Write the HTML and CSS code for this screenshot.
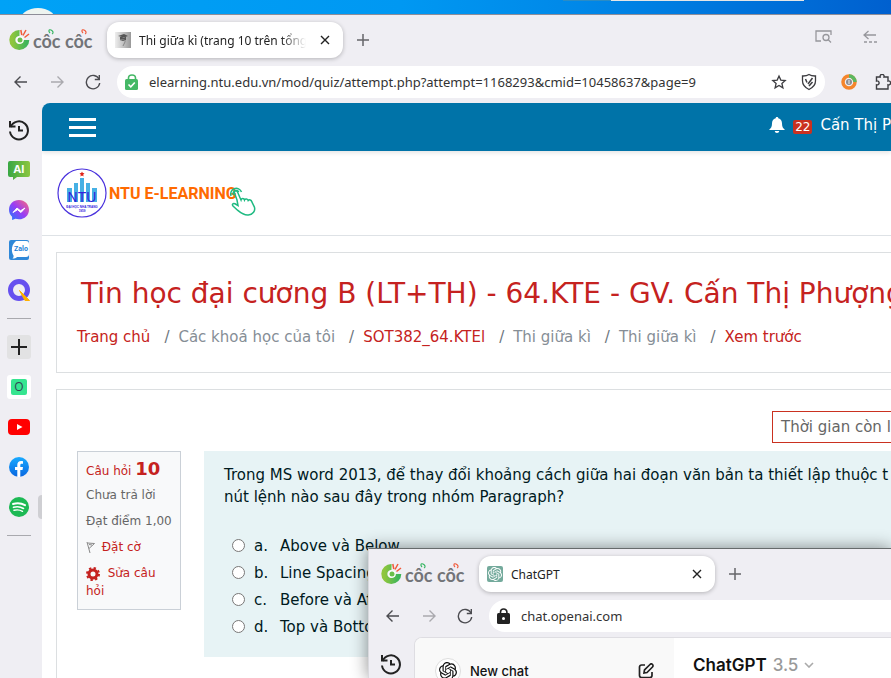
FILE: index.html
```html
<!DOCTYPE html>
<html lang="vi">
<head>
<meta charset="utf-8">
<title>Thi giữa kì</title>
<link rel="stylesheet" href="styles.css">
</head>
<body>
<svg class="defs" aria-hidden="true">
  <defs>
    <linearGradient id="g-coc" x1="0" y1="0" x2="1" y2="0"><stop offset="0" stop-color="#8fc63d"/><stop offset="1" stop-color="#3fb55a"/></linearGradient>
    <linearGradient id="g-ai" x1="0" y1="0" x2="1" y2="0"><stop offset="0" stop-color="#38a744"/><stop offset="1" stop-color="#8cc63f"/></linearGradient>
    <linearGradient id="g-msg" x1="0" y1="1" x2="1" y2="0"><stop offset="0" stop-color="#1a7cff"/><stop offset=".5" stop-color="#9a3cf5"/><stop offset="1" stop-color="#ff6a78"/></linearGradient>
    <linearGradient id="g-fb" x1="0" y1="0" x2="0" y2="1"><stop offset="0" stop-color="#19aaff"/><stop offset="1" stop-color="#0866e0"/></linearGradient>
    <symbol id="coc" viewBox="0 0 86 26">
      <path d="M11.500 7A7 7 0 1 0 18.300 14" fill="none" stroke="url(#g-coc)" stroke-width="6"/>
      <circle cx="12" cy="14" r="3.800" fill="#fff"/><circle cx="12" cy="14" r="2.500" fill="#6abf4b"/>
      <path d="M12.800 4l1 5M18 4l-3 5.500M21 8l-4.500 3.500" stroke="#f15a3a" stroke-width="1.500"/>
      <text x="25" y="22" class="coc-word">côc côc</text>
      <path d="M42 7c-2-2-1-4 1-3s3 3 1 4" fill="none" stroke="#35b561" stroke-width="1.200"/>
      <path d="M75 7c-2-2-1-4 1-3s3 3 1 4" fill="none" stroke="#f15a3a" stroke-width="1.200"/>
    </symbol>
    <symbol id="back" viewBox="0 0 16 16"><path d="M14 8H2M7.500 2.500L2 8l5.500 5.500" fill="none" stroke="currentColor" stroke-width="1.400"/></symbol>
    <symbol id="fwd" viewBox="0 0 16 16"><path d="M2 8h12M8.500 2.500L14 8l-5.500 5.500" fill="none" stroke="currentColor" stroke-width="1.400"/></symbol>
    <symbol id="reload" viewBox="0 0 16 16"><path d="M14 5A6.700 6.700 0 1 0 14.700 9" fill="none" stroke="currentColor" stroke-width="1.400"/><path d="M14.300 1v4.500H9.800" fill="none" stroke="currentColor" stroke-width="1.400"/></symbol>
    <symbol id="close" viewBox="0 0 10 10"><path d="M1 1l8 8M9 1L1 9" stroke="#222" stroke-width="1.400"/></symbol>
    <symbol id="plus" viewBox="0 0 12 12"><path d="M6 0v12M0 6h12" stroke="#66666a" stroke-width="1.500"/></symbol>
    <symbol id="history" viewBox="0 0 22 22"><path d="M2.600 8A9 9 0 1 1 2 12.500" fill="none" stroke="#222" stroke-width="2"/><path d="M2 2v5.500h5.500M11 7v4.500h4" fill="none" stroke="#222" stroke-width="2"/></symbol>
    <symbol id="knot" viewBox="0 0 24 24"><path fill="currentColor" d="M22.282 9.821a5.985 5.985 0 0 0-.516-4.910 6.046 6.046 0 0 0-6.510-2.900A6.065 6.065 0 0 0 4.981 4.182a5.985 5.985 0 0 0-3.998 2.900 6.046 6.046 0 0 0 .743 7.097 5.980 5.980 0 0 0 .511 4.911 6.051 6.051 0 0 0 6.515 2.900A5.985 5.985 0 0 0 13.260 24a6.056 6.056 0 0 0 5.772-4.206 5.990 5.990 0 0 0 3.998-2.900 6.056 6.056 0 0 0-.747-7.073zM13.260 22.430a4.476 4.476 0 0 1-2.876-1.041l.141-.080 4.779-2.758a.795.795 0 0 0 .393-.681v-6.737l2.020 1.169a.071.071 0 0 1 .038.052v5.583a4.504 4.504 0 0 1-4.495 4.494zM3.600 18.304a4.471 4.471 0 0 1-.535-3.014l.142.085 4.783 2.759a.771.771 0 0 0 .781 0l5.843-3.369v2.332a.080.080 0 0 1-.033.062L9.740 19.950a4.500 4.500 0 0 1-6.140-1.646zM2.341 7.896a4.485 4.485 0 0 1 2.366-1.973V11.600a.766.766 0 0 0 .388.677l5.815 3.354-2.020 1.169a.076.076 0 0 1-.071 0l-4.830-2.787A4.504 4.504 0 0 1 2.341 7.872zm16.597 3.855l-5.834-3.387L15.119 7.200a.076.076 0 0 1 .071 0l4.830 2.791a4.494 4.494 0 0 1-.676 8.105v-5.678a.790.790 0 0 0-.407-.667zm2.010-3.023l-.141-.085-4.774-2.782a.776.776 0 0 0-.785 0L9.409 9.230V6.897a.066.066 0 0 1 .028-.061l4.830-2.787a4.500 4.500 0 0 1 6.681 4.660zM8.307 12.863l-2.020-1.164a.080.080 0 0 1-.038-.057V6.074a4.500 4.500 0 0 1 7.376-3.453l-.142.080L8.704 5.459a.795.795 0 0 0-.393.681zm1.097-2.365l2.602-1.500 2.607 1.500v2.999l-2.597 1.500-2.607-1.500z"/></symbol>
  </defs>
</svg>
<div class="desktop">
  <svg class="desk-icon" width="36" height="6"><ellipse cx="18" cy="13" rx="18" ry="13" fill="#eef4f0"/></svg>
  <div class="behind"></div>

  <section class="window main-window">
    <div class="tabs">
      <svg class="brand" width="86" height="26" role="img" aria-label="Cốc Cốc"><use href="#coc"/></svg>
      <div class="tab">
        <svg width="16" height="16"><defs><linearGradient id="g-fav" x1="0" x2="1"><stop offset="0" stop-color="#eee"/><stop offset="1" stop-color="#999"/></linearGradient></defs><rect width="16" height="16" fill="url(#g-fav)"/><path d="M3 4l6-2 4 2-4 1.500zM5 5v3l3 1 3-1V5z" fill="#555"/><path d="M5 8c1-1 6-1 5 2l-2 4" fill="none" stroke="#888"/></svg>
        <span class="tab-title faded">Thi giữa kì (trang 10 trên tổng</span>
        <button aria-label="Đóng thẻ"><svg width="10" height="10"><use href="#close"/></svg></button>
      </div>
      <button class="new-tab" aria-label="Thẻ mới"><svg width="12" height="12"><use href="#plus"/></svg></button>
      <div class="tab-tools">
        <svg width="18" height="14" fill="none" stroke="#97979c" stroke-width="1.300"><path d="M6 11H1V1h15v4"/><circle cx="11" cy="7.500" r="3"/><path d="M13 9.500l3 3"/></svg>
        <svg width="14" height="14" fill="none" stroke="#97979c" stroke-width="1.300"><path d="M13 5H1M5.500 1L1 5l4.500 4"/><path d="M1 12h13" stroke-dasharray="3 2"/></svg>
      </div>
    </div>
    <div class="toolbar">
      <button aria-label="Quay lại"><svg width="16" height="16"><use href="#back"/></svg></button>
      <button class="dim" aria-label="Tiến"><svg width="16" height="16"><use href="#fwd"/></svg></button>
      <button aria-label="Tải lại"><svg width="16" height="16"><use href="#reload"/></svg></button>
      <div class="address">
        <svg width="14" height="16"><path d="M3.500 6V4a3.500 3 0 0 1 7 0v2" fill="none" stroke="#45b866" stroke-width="1.600"/><rect y="5" width="13" height="11" rx="1.500" fill="#45b866"/><path d="M3.500 10.500l2.300 2.300 4-4.300" fill="none" stroke="#fff" stroke-width="1.600"/></svg>
        <input aria-label="Địa chỉ" value="elearning.ntu.edu.vn/mod/quiz/attempt.php?attempt=1168293&amp;cmid=10458637&amp;page=9">
        <svg width="16" height="16" fill="none" stroke="#3c3c40" stroke-width="1.300"><path d="M8 2l1.800 4.100 4.400.4-3.300 2.900 1 4.400L8 11.500l-3.900 2.300 1-4.400-3.300-2.900 4.400-.4z"/></svg>
        <svg width="16" height="18" fill="none" stroke="#3c3c40" stroke-width="1.300"><path d="M8 1.500c2 1.300 4 1.600 6.500 1.500v5c0 4-2.500 6.500-6.500 8.500-4-2-6.500-4.500-6.500-8.500V3C4 3.100 6 2.800 8 1.500z"/><path d="M4.500 6l1.500 3.500M7 11l4.500-6M8 13l3.500-4" stroke-width="1.500"/></svg>
      </div>
      <svg width="16" height="16"><circle cx="8" cy="8" r="6" fill="none" stroke="#f5852b" stroke-width="3.500"/><path d="M8 2a6 6 0 0 1 6 6" fill="none" stroke="#5bb860" stroke-width="3.500"/><circle cx="8" cy="8" r="3" fill="#8c8c90"/><path d="M8 6v4" stroke="#eee"/></svg>
      <svg class="puzzle" width="16" height="16" fill="none" stroke="#3c3c40" stroke-width="1.400"><path d="M1.500 3h3.700a2 2 0 1 1 3.800 0H13v4a2 2 0 1 1 0 3.800V15H1.500v-4.200a2 2 0 1 0 0-3.800z"/></svg>
    </div>
    <div class="body">
      <nav class="rail" aria-label="Thanh bên">
        <button aria-label="Lịch sử"><svg width="22" height="22"><use href="#history"/></svg></button>
        <button aria-label="AI"><svg width="22" height="20"><path d="M2 1h18a2 2 0 0 1 2 2v12a2 2 0 0 1-2 2H9l-4 3v-3H2a2 2 0 0 1-2-2V3a2 2 0 0 1 2-2z" fill="url(#g-ai)"/><text x="11" y="13" class="ai-word">AI</text></svg></button>
        <button aria-label="Messenger"><svg width="20" height="20"><path d="M10 0C4.300 0 0 4.200 0 9.700c0 2.900 1.200 5.300 3.100 7V20l3.300-1.200c1.100.3 2.300.5 3.600.5 5.700 0 10-4.200 10-9.600S15.700 0 10 0z" fill="url(#g-msg)"/><path d="M4 12.500l4-4.500 3.500 2.800L16 8l-4 4.500-3.500-2.800z" fill="#fff" stroke="#fff"/></svg></button>
        <button aria-label="Zalo"><svg width="20" height="20"><rect width="20" height="20" rx="2" fill="#2f88d8"/><path d="M7 1h10a3 3 0 0 1 3 3v10a3 3 0 0 1-3 3H8c-1 1-2.500 1.500-4.500 1.500 1-1 1.300-2 1-3C2 12 2 5 7 1z" fill="#fff"/><text x="12" y="11" class="zalo-word">Zalo</text></svg></button>
        <button aria-label="Tìm kiếm"><svg width="22" height="22"><circle cx="11" cy="11" r="8.500" fill="none" stroke="#6650ef" stroke-width="5"/><path d="M11.500 11.500l10 10h-4.500z" fill="#ffb000" stroke="#ffb000"/></svg></button>
        <hr>
        <button class="chip add" aria-label="Thêm"><svg width="16" height="16"><path d="M8 0v16M0 8h16" stroke="#222" stroke-width="2"/></svg></button>
        <button class="chip letter"><span>O</span></button>
        <button aria-label="YouTube"><svg width="22" height="16"><rect width="22" height="16" rx="4" fill="#f00"/><path d="M9 5l5.500 3L9 11z" fill="#fff"/></svg></button>
        <button aria-label="Facebook"><svg width="20" height="20"><circle cx="10" cy="10" r="10" fill="url(#g-fb)"/><path d="M8.300 20v-7H6v-3h2.300V8c0-2.600 1.500-4 3.800-4 .9 0 1.700.1 1.900.2v2.600h-1.300c-1 0-1.400.6-1.400 1.400V10H14l-.5 3h-2.200v7z" fill="#fff"/></svg></button>
        <button aria-label="Spotify"><svg width="20" height="20" fill="none" stroke="#fff" stroke-linecap="round"><circle cx="10" cy="10" r="10" fill="#1db954" stroke="none"/><path d="M4 7c4-1.200 8.500-.8 12 1.200" stroke-width="2"/><path d="M4.500 10.300c3.500-1 7-.6 10 1.100" stroke-width="1.700"/><path d="M5 13.300c3-.8 6-.5 8.500 1" stroke-width="1.400"/></svg></button>
        <hr>
        <i class="grip"></i>
      </nav>
      <main class="page">
        <header class="site-bar">
          <button class="burger" aria-label="Menu"><i></i><i></i><i></i></button>
          <div class="user">
            <svg width="16" height="16"><path d="M8 0c1 0 1.300.6 1.300 1.300C12 2 13 4 13 6.500c0 3 .8 4.500 3 6.500H0c2.200-2 3-3.500 3-6.500C3 4 4 2 6.700 1.300 6.700.6 7 0 8 0zM5.800 14h4.400c0 1.200-1 2-2.200 2s-2.200-.8-2.200-2z" fill="#fff"/></svg>
            <span class="badge">22</span>
            <a href="#user">Cấn Thị P</a>
          </div>
        </header>
        <div class="logo-bar">
          <svg width="50" height="50" role="img" aria-label="NTU"><circle cx="25" cy="25" r="24" fill="#fff" stroke="#4a32dd" stroke-width="1.200"/><path d="M10 34V20h5v14zM17 34V15h4v19zM23 34V10h4v24zM29 34V15h4v19zM35 34V20h5v14z" fill="#46b0e4"/><path d="M25 3.500l.8 1.600 1.700.2-1.200 1.300.2 1.800-1.500-.9-1.500.9.200-1.800-1.200-1.300 1.700-.2z" fill="#e02418"/><text x="25" y="34" class="seal-name">NTU</text><text x="25" y="40" class="seal-small">ĐẠI HỌC NHA TRANG</text><text x="25" y="44" class="seal-small">1959</text></svg>
          <span class="site-name">NTU E-LEARNING</span>
          <svg class="hand" width="28" height="30" fill="none" stroke="#1fba82" stroke-width="1.500"><path d="M8 13L5.500 6c-.8-2.200 2-3.300 3-1l3.500 8c.5-2 3-2 3.500 0 .8-1.600 3.200-1.300 3.700.5 1-1.200 3.200-.7 3.600 1.300l2.500 5c1.500 4-1.500 7.700-6 8.200-4.500.5-8-2.500-11-5L4 19c-1.300-1.600 0-3 2-2.200l3 1.700z"/><path d="M2 9a5.500 5.500 0 1 1 10.500-4M4.500 8a3 3 0 1 1 5.300-3"/></svg>
        </div>
        <section class="card heading">
          <h1>Tin học đại cương B (LT+TH) - 64.KTE - GV. Cấn Thị Phượng</h1>
          <ol class="crumbs">
            <li><a href="#home">Trang chủ</a></li>
            <li>Các khoá học của tôi</li>
            <li><a href="#course">SOT382_64.KTEl</a></li>
            <li>Thi giữa kì</li>
            <li>Thi giữa kì</li>
            <li><a href="#preview">Xem trước</a></li>
          </ol>
        </section>
        <section class="card quiz">
          <div class="timer">Thời gian còn l</div>
          <div class="question-row">
            <aside class="info">
              <h2>Câu hỏi <b>10</b></h2>
              <p>Chưa trả lời</p>
              <p>Đạt điểm 1,00</p>
              <p><a href="#flag"><svg width="12" height="13" fill="none" stroke="#888"><path d="M1 1l3 11M1.500 2l7 .5-5.500 5M3 3.500l3 .5"/></svg> Đặt cờ</a></p>
              <p class="edit"><a href="#edit"><svg width="14" height="14"><circle cx="7" cy="7" r="4" fill="none" stroke="#c52220" stroke-width="3"/><circle cx="7" cy="7" r="6" fill="none" stroke="#c52220" stroke-width="2" stroke-dasharray="2.350 2.350"/></svg>&nbsp; Sửa câu hỏi</a></p>
            </aside>
            <form class="question">
              <p>Trong MS word 2013, để thay đổi khoảng cách giữa hai đoạn văn bản ta thiết lập thuộc t<br>nút lệnh nào sau đây trong nhóm Paragraph?</p>
              <label><input type="radio" name="answer"><span>a.</span>Above và Below</label>
              <label><input type="radio" name="answer"><span>b.</span>Line Spacing</label>
              <label><input type="radio" name="answer"><span>c.</span>Before và After</label>
              <label><input type="radio" name="answer"><span>d.</span>Top và Bottom</label>
            </form>
          </div>
        </section>
      </main>
    </div>
  </section>

  <section class="window chat-window">
    <div class="tabs">
      <svg class="brand" width="86" height="26" role="img" aria-label="Cốc Cốc"><use href="#coc"/></svg>
      <div class="tab">
        <span class="gpt-fav"><svg width="14" height="14"><use href="#knot"/></svg></span>
        <span class="tab-title">ChatGPT</span>
        <button aria-label="Đóng thẻ"><svg width="10" height="10"><use href="#close"/></svg></button>
      </div>
      <button class="new-tab" aria-label="Thẻ mới"><svg width="12" height="12"><use href="#plus"/></svg></button>
    </div>
    <div class="toolbar">
      <button aria-label="Quay lại"><svg width="16" height="16"><use href="#back"/></svg></button>
      <button class="dim" aria-label="Tiến"><svg width="16" height="16"><use href="#fwd"/></svg></button>
      <button aria-label="Tải lại"><svg width="16" height="16"><use href="#reload"/></svg></button>
      <div class="address">
        <svg width="14" height="16"><path d="M3.500 6V4a3.200 3 0 0 1 6.400 0v2" fill="none" stroke="#222" stroke-width="1.600"/><rect y="5" width="13" height="11" rx="1.500" fill="#222"/><circle cx="6.500" cy="10.500" r="1.500" fill="#fff"/></svg>
        <input aria-label="Địa chỉ" value="chat.openai.com">
      </div>
    </div>
    <div class="body">
      <nav class="rail" aria-label="Thanh bên">
        <button aria-label="Lịch sử"><svg width="22" height="22"><use href="#history"/></svg></button>
      </nav>
      <div class="chat">
        <aside class="chat-side">
          <button class="new-chat"><span class="avatar"><svg width="18" height="18"><use href="#knot"/></svg></span><span>New chat</span>
            <svg width="16" height="16" fill="none" stroke="#222" stroke-width="1.700"><path d="M7 2H3.500A2 2 0 0 0 1.500 4v8.500a2 2 0 0 0 2 2H12a2 2 0 0 0 2-2V9M6 10l.5-3L12 1.500a1.700 1.700 0 0 1 2.500 2.500L9 9.500z"/></svg></button>
        </aside>
        <div class="chat-main">
          <button class="model">ChatGPT <span>3.5</span><svg width="10" height="6"><path d="M1 1l4 4 4-4" fill="none" stroke="#aaa" stroke-width="1.600"/></svg></button>
        </div>
      </div>
    </div>
  </section>
</div>
</body>
</html>
```
FILE: styles.css
```css
* { box-sizing: border-box; }
body { margin: 0; }
button { padding: 0; border: 0; background: none; font: inherit; color: inherit; display: flex; align-items: center; justify-content: center; }
a { color: #c52220; text-decoration: none; }
svg { flex: none; }
.defs { position: absolute; width: 0; height: 0; }

.desktop { position: relative; height: 100vh; overflow: hidden; background: linear-gradient(90deg, #00a2f6 0, #0098f2 45%, #0088e8 65%, #0060cf 100%); }
.desk-icon { position: absolute; left: 20px; top: 8px; }
.behind { position: absolute; left: 563px; top: 0; width: 241px; height: 1px; background: linear-gradient(90deg, #2b8cc4 20%, #e6e6e6 20%); }

.window { position: absolute; right: 0; bottom: 0; display: flex; flex-direction: column; overflow: hidden; background: #efeef3; border-top: 1px solid #8e8d98; font-family: "Noto Sans", sans-serif; }
.main-window { left: 0; top: 14px; }
.chat-window { left: 368px; top: 548px; padding-left: 3px; border-top-color: #666b6c; border-left: 1px solid #d9d9de; }
.desktop > .chat-window { overflow: visible; box-shadow: 0 0 16px rgba(0, 0, 0, .45); }

.tabs { display: flex; padding: 7px 0 8px 8px; }
.brand { margin: 4px 13px 0 0; }
.coc-word { font: bold 18px Lato, sans-serif; fill: #727478; }
.tab { display: flex; align-items: center; gap: 8px; width: 236px; height: 36px; padding: 0 13px 0 8px; border-radius: 12px; background: #fff; box-shadow: 0 1px 4px rgba(0, 0, 0, .25); font-size: 12px; color: #222; }
.tab-title { flex: 1; overflow: hidden; white-space: nowrap; }
.faded { -webkit-mask-image: linear-gradient(90deg, #000 85%, transparent); mask-image: linear-gradient(90deg, #000 85%, transparent); }
.tab button { margin-left: 6px; }
.new-tab { width: 40px; height: 36px; }
.tab-tools { display: flex; gap: 30px; margin-left: auto; padding: 8px 14px 0 0; }

.toolbar { display: flex; align-items: center; height: 32px; padding-left: 13px; color: #4b4b50; }
.toolbar > button { margin-right: 20px; }
.toolbar .dim { color: #aaa9ae; }
.address { flex: 1; display: flex; align-items: center; gap: 14px; height: 32px; margin: 0 16px 0 -4px; padding: 0 8px; border-radius: 16px; background: #fff; }
.address input { flex: 1; min-width: 0; margin-left: -4px; padding: 0; border: 0; outline: 0; background: none; font: 13px "Noto Sans", sans-serif; color: #333; }
.puzzle { margin-left: 18px; }
.chat-window .address { margin-right: 0; border-radius: 16px 0 0 16px; }

.body { flex: 1; display: flex; min-height: 0; margin-top: 5px; }
.rail { position: relative; width: 42px; flex: none; display: flex; flex-direction: column; align-items: center; gap: 16px; padding: 15px 4px 0 0; }
.rail button { width: 24px; height: 24px; flex: none; }
.rail hr { width: 24px; height: 1px; margin: 0; border: 0; background: #a9a9ae; flex: none; }
.rail .chip { border-radius: 3px; background: #e2e2e3; }
.rail .letter { background: #fff; }
.letter span { width: 16px; height: 16px; border-radius: 2px; background: #36e590; font: 12px/16px "Open Sans", sans-serif; color: #345; }
.grip { position: absolute; right: 0; top: 392px; width: 4px; height: 24px; border-radius: 4px 0 0 4px; background: #cfcfd3; }
.ai-word { font: bold 11px "Open Sans", sans-serif; fill: #fff; text-anchor: middle; }
.zalo-word { font: bold 7px Roboto, sans-serif; fill: #1d7fd6; text-anchor: middle; }

.page { flex: 1; min-width: 0; overflow: hidden; border-radius: 8px 0 0; background: #fff; font-family: "DejaVu Sans", sans-serif; font-size: 15px; white-space: nowrap; }
.site-bar { display: flex; align-items: center; justify-content: space-between; height: 48px; padding-left: 27px; background: #0073a8; box-shadow: 0 2px 4px rgba(0, 0, 0, .1); }
.burger { flex-direction: column; gap: 5px; }
.burger i { width: 27px; height: 3px; background: #fff; }
.user { display: flex; align-items: center; gap: 8px; height: 48px; padding-bottom: 4px; }
.user a { color: #fff; }
.badge { padding: 0 2px; margin-top: 4px; background: #ca3120; color: #fff; font-size: 12px; line-height: 14px; border-radius: 2px; }
.logo-bar { display: flex; align-items: center; height: 85px; padding-left: 15px; border-bottom: 1px solid #dee2e6; }
.seal-name { font: 14px "Liberation Sans", sans-serif; fill: #3322dd; text-anchor: middle; }
.seal-small { font: bold 3px "Liberation Sans", sans-serif; fill: #3322dd; text-anchor: middle; }
.site-name { margin-left: 2px; font: bold 16px Roboto, sans-serif; color: #ff6a00; }
.hand { margin: 18px 0 0 -8px; }

.card { margin: 16px 0 0 14px; padding-left: 20px; border: 1px solid #dcdfe1; border-right: 0; background: #fff; }
.heading { height: 121px; padding-top: 23px; }
h1 { margin: 0; padding-left: 4px; font-size: 28px; font-weight: normal; line-height: 36px; color: #c52220; }
.crumbs { display: flex; margin: 0; padding: 15px 0 0; list-style: none; line-height: 20px; color: #868e96; }
.crumbs li + li::before { content: "/"; margin: 0 9px 0 14px; color: #6c757d; }
.quiz { height: 320px; padding-top: 21px; }
.timer { width: 119px; height: 32px; margin-left: auto; padding-left: 8px; border: 1px solid #ca3120; border-right: 0; line-height: 30px; color: #666; }
.question-row { display: flex; align-items: flex-start; gap: 23px; margin-top: 8px; }
.info { width: 104px; flex: none; padding: 6px 8px 9px; border: 1px solid #cad0d7; background: #f8f9fa; font-size: 12px; color: #666; }
.info h2 { margin: 0 0 4px; font-size: 12px; font-weight: normal; line-height: 22px; color: #c52220; }
.info b { font-size: 18px; }
.info p { margin: 0 0 8px; line-height: 18px; }
.info svg { vertical-align: middle; }
.info .edit { margin: 0; white-space: normal; }
.question { flex: 1; min-width: 0; height: 206px; padding: 13px 0 0 20px; background: #e7f3f5; color: #001a1e; line-height: 22px; }
.question p { margin: 0 0 24px; }
.question label { display: flex; align-items: center; height: 27px; padding-left: 8px; }
.question input { width: 13px; height: 13px; margin: 0 9px 0 0; }
.question span { width: 26px; }

.chat { flex: 1; display: flex; border: 1px solid #dedde2; border-width: 1px 0 0 1px; border-radius: 8px 0 0; background: #fff; overflow: hidden; }
.chat-side { width: 259px; background: #f9f9f9; padding: 20px 20px 0; }
.new-chat { width: 100%; gap: 9px; font: 500 13px Inter, sans-serif; color: #111; }
.new-chat > svg { margin-left: auto; }
.avatar { width: 26px; height: 26px; display: flex; align-items: center; justify-content: center; border: 1px solid #ddd; border-radius: 50%; background: #fff; }
.chat-main { padding: 16px 19px; }
.model { gap: 6px; font: 600 17px/22px Inter, sans-serif; color: #111; }
.model span { font-weight: 500; color: #999; }
.gpt-fav { display: flex; width: 16px; height: 16px; align-items: center; justify-content: center; border-radius: 2px; background: #74aa9c; color: #fff; }
```
